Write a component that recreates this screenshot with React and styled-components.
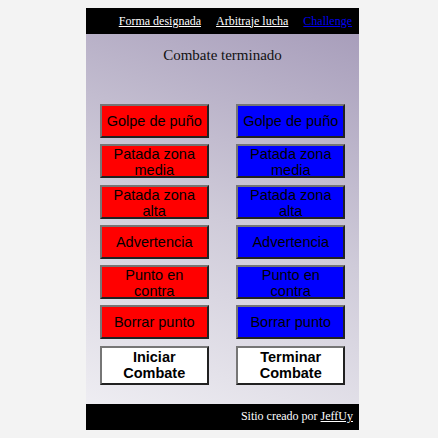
import styled, { createGlobalStyle } from "styled-components";

const GlobalStyle = createGlobalStyle`
  body {
    margin: 8px 0 0 0;
    background: #f3f3f3;
    font-family: "Liberation Serif", serif;
  }
`;

const Page = styled.div`
  width: 273px;
  margin-left: 86px;
`;

const Nav = styled.nav`
  height: 26px;
  background: #000;
  display: flex;
  align-items: center;
  justify-content: flex-end;
  gap: 15px;
  padding-right: 7px;
`;

const NavLink = styled.a`
  font-size: 12px;
  color: ${(p) => (p.$visited ? "#fff" : "#0000ee")};
  text-decoration: underline;
`;

const Main = styled.main`
  background: linear-gradient(200deg, #a89ebb 0%, #cfcbd9 50%, #eeedf2 100%);
  padding: 13px 0 19px;
`;

const Title = styled.h2`
  margin: 0 0 40px;
  font-size: 15px;
  font-weight: normal;
  text-align: center;
  color: #111;
  line-height: 17px;
`;

const Grid = styled.div`
  display: grid;
  grid-template-columns: 1fr 1fr;
  justify-items: center;
  row-gap: 6.3px;
`;

const Btn = styled.button`
  width: 109px;
  height: ${(p) => (p.$bold ? "39px" : "34px")};
  padding: 0 4px;
  background: ${(p) => p.$bg};
  border: 2px outset #767676;
  font-family: "Liberation Sans", Arial, sans-serif;
  font-size: 14.5px;
  font-weight: ${(p) => (p.$bold ? "bold" : "normal")};
  line-height: 16px;
  color: #000;
`;

const Footer = styled.footer`
  height: 26px;
  background: #000;
  color: #fff;
  font-size: 12px;
  display: flex;
  align-items: center;
  justify-content: flex-end;
  padding-right: 6px;
`;

const FootLink = styled.a`
  color: #fff;
  text-decoration: underline;
  margin-left: 3px;
`;

const actions = [
  "Golpe de puño",
  "Patada zona media",
  "Patada zona alta",
  "Advertencia",
  "Punto en contra",
  "Borrar punto",
];

export default function App() {
  return (
    <>
      <GlobalStyle />
      <Page>
        <Nav>
          <NavLink $visited href="#">Forma designada</NavLink>
          <NavLink $visited href="#">Arbitraje lucha</NavLink>
          <NavLink href="#">Challenge</NavLink>
        </Nav>
        <Main>
          <Title>Combate terminado</Title>
          <Grid>
            {actions.map((a) => [
              <Btn key={a + "r"} $bg="#ff0000">{a}</Btn>,
              <Btn key={a + "b"} $bg="#0000ff">{a}</Btn>,
            ])}
            <Btn $bold $bg="#fff">Iniciar Combate</Btn>
            <Btn $bold $bg="#fff">Terminar Combate</Btn>
          </Grid>
        </Main>
        <Footer>
          Sitio creado por<FootLink href="#">JeffUy</FootLink>
        </Footer>
      </Page>
    </>
  );
}
